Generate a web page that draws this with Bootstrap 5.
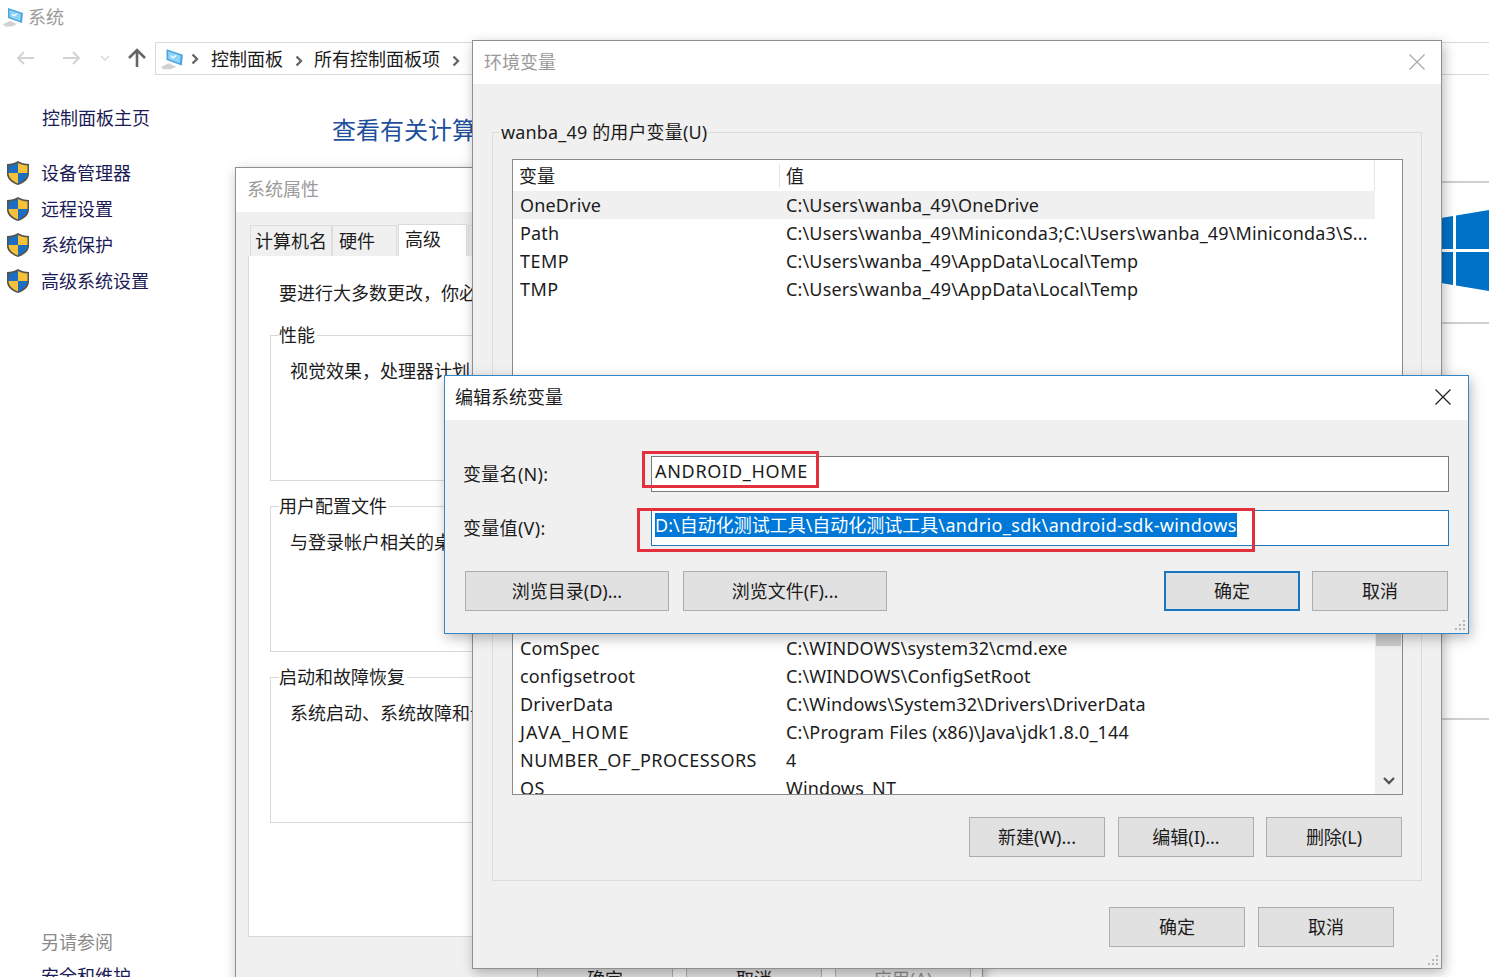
<!DOCTYPE html>
<html lang="zh">
<head>
<meta charset="utf-8">
<title>系统</title>
<link href="https://cdn.jsdelivr.net/npm/bootstrap@5.3.0/dist/css/bootstrap.min.css" rel="stylesheet">
<style>
html,body{height:100%;overflow:hidden;background:#fff}
body{font-family:"Noto Sans","Noto Sans CJK SC",sans-serif;font-size:18px;line-height:24px;color:#1c1c1c}
.desk{position:relative;width:1489px;height:977px;overflow:hidden;background:#fff}
.ex-title{height:33px;color:#9a9a9a;padding-left:2px;gap:4px}
.ex-nav{height:41px;padding-top:9px}
.nav-btns{width:155px;padding-left:15px}
.nav-btns svg{flex:none}
.nb-fwd{margin-left:27px}
.nb-down{margin-left:17px}
.nb-up{margin-left:16px}
.addr{height:33px;flex:1;border:1px solid #d9d9d9;border-right:0;padding-left:4px;white-space:nowrap}
.addr-first{margin:0 12px 0 7px}
.crumb-sep{width:31px;text-align:center}
.side{width:332px;flex:none}
.side-home{height:36px;margin-top:26px;padding-left:42px;color:#1b1b55}
.side-list{padding-top:19px}
.side-item{height:36px;gap:11px;padding-left:6px;color:#1b1b55}
.side-more{margin-top:626px;padding-left:41px;height:34px;color:#8a8a8a}
.side-link{padding-left:41px;height:34px;color:#1b1b55;white-space:nowrap}
.ex-main{flex:1;min-width:0}
.ex-h{font-size:24px;line-height:32px;color:#1d4f9c;padding-top:40px;height:107px;white-space:nowrap}
.sec1{height:141px;border-top:2px solid #cfcfcf;padding-top:25px}
.sec2{height:396px;border-top:2px solid #cfcfcf}
.sec3{border-top:2px solid #cfcfcf}
.wnd{position:absolute;background:#f0f0f0;border:1px solid #8f8f8f;box-shadow:2px 4px 12px rgba(0,0,0,.28)}
.w-sys{left:235px;top:167px;width:748px;height:860px}
.w-env{left:472px;top:40px;width:970px;height:929px}
.w-edit{left:444px;top:375px;width:1025px;height:259px;border-color:#2f86c9}
.ttl{background:#fff;padding-left:11px;color:#9a9a9a;padding-bottom:2px}
.w-sys .ttl{height:44px}
.w-env .ttl{height:43px;padding-right:16px}
.w-edit .ttl{height:44px;color:#1c1c1c;padding-right:17px;padding-left:10px}
.tabbar{margin:12px 0 0 14px;height:32px;align-items:flex-end}
.tb{height:31px;background:#f0f0f0;border:1px solid #dcdcdc;border-bottom:0;white-space:nowrap;display:flex;align-items:center;padding-left:4px}
.tb-a{width:82px}
.tb-b{width:65px;padding-left:6px}
.tb-on{height:32px;width:69px;background:#fff;padding:0 0 3px 6px;margin-left:1px;margin-right:1px}
.tb-c{width:60px}
.tabp{margin:0 10px 0 12px;height:681px;background:#fff;border:1px solid #d9d9d9;border-top:0;padding:25px 0 0 21px;overflow:hidden}
.tabp-top{padding-left:9px;height:54px;white-space:nowrap}
.sgroup{height:146px;border:1px solid #d9d9d9;margin-bottom:25px;margin-right:10px;padding:0 0 0 19px;white-space:nowrap}
.sgroup-l{background:#fff;display:inline-block;margin:-13px 0 0 -11px;padding-right:2px;vertical-align:top}
.sgroup-t{margin-top:-1px}
.sys-btns{margin:22px 0 0 301px;gap:13px}
.wbtn{--bs-btn-padding-y:0;--bs-btn-padding-x:0;--bs-btn-font-size:18px;--bs-btn-line-height:24px;--bs-btn-color:#1c1c1c;--bs-btn-bg:#e1e1e1;--bs-btn-border-color:#adadad;--bs-btn-border-radius:0;--bs-btn-hover-bg:#e1e1e1;--bs-btn-hover-color:#1c1c1c;--bs-btn-hover-border-color:#adadad;width:136px;height:40px;flex:none}
.wbtn-wide{width:204px}
.wbtn-def{--bs-btn-border-color:#1c76bd;--bs-btn-hover-border-color:#1c76bd;border-width:2px;margin-right:-2px}
.wbtn-off{--bs-btn-color:#8c8c8c;--bs-btn-hover-color:#8c8c8c}
.env-b{padding:48px 19px 0 19px}
.vgroup{border:1px solid #dcdcdc;padding:0 18px 0 19px}
.vg1{height:443px;padding-top:26px;margin-bottom:10px}
.vg2{height:296px;padding-top:14px}
.vg-l{margin:-39px 0 0 -13px;height:26px;width:max-content;padding:0 0 0 2px;background:#f0f0f0;position:relative;white-space:nowrap;letter-spacing:.15px}
.vlist{background:#fff;border:1px solid #8a8a8a;overflow:hidden}
.vl1{height:401px;margin-top:13px}
.vl2{height:195px;padding-top:33px;display:flex}
.vrows{flex:1;min-width:0}
.vsb{width:27px;flex:none;background:#f0f0f0;margin-top:-33px;display:flex;flex-direction:column;align-items:center;justify-content:space-between}
.vsb-thumb{width:25px;height:45px;background:#cdcdcd}
.vhead{height:31px;width:862px;border-right:1px solid #e5e5e5}
.vhead>div:first-child{width:267px;border-right:1px solid #e5e5e5;padding-left:6px}
.vhead>div+div{padding-left:6px}
.vrow{height:28px;width:862px;white-space:nowrap;letter-spacing:.15px}
.vrow-sel{background:#f0f0f0}
.vrow>div:first-child{width:267px;flex:none;padding-left:7px}
.vrow>div+div{padding-left:6px}
.caps{letter-spacing:.45px}
.caps-j{letter-spacing:1.2px}
.env-acts{margin-top:22px;gap:12px;justify-content:flex-end;padding-right:1px}
.env-acts .wbtn:first-child{margin-right:1px}
.env-foot{margin-top:26px;gap:13px;justify-content:flex-end;padding-right:28px}
.edit-b{padding:36px 19px 0 19px}
.ef{height:36px;margin-bottom:18px}
.ef-l{width:188px;flex:none;margin-left:-1px;margin-top:-1px}
.ef-l span{letter-spacing:.3px}
.ef-i{flex:1;border:1px solid #7a7a7a;border-radius:0;padding:2px 3px;font-size:18px;line-height:24px;color:#1c1c1c;background:#fff;min-height:0;height:36px;white-space:nowrap}
.ef-i-on{border-color:#1f78be}
.ef-caps{letter-spacing:.7px}
.sel-t{background:#0078d7;color:#fff;display:inline-block;line-height:24px}
.sel-l{letter-spacing:.36px}
.edit-acts{margin-top:25px;padding:0 1px;gap:14px}
.red-a{position:absolute;border:3px solid #e3303c;pointer-events:none}
.ra1{left:642px;top:451px;width:177px;height:37px}
.ra2{left:637px;top:508px;width:618px;height:44px}
.grip{position:absolute;right:2px;bottom:2px}
</style>
</head>
<body>
<div class="desk">
  <!-- explorer -->
  <div class="ex">
    <div class="ex-title d-flex align-items-center">
      <svg width="22" height="22" viewBox="0 0 22 22"><path d="M6 2l15 5-1 10-14-5z" fill="#4aa3e2"/><path d="M7.500 4l11.500 4-.8 7L7.500 11z" fill="#8fd3f6"/><path d="M10 8l2 2 3-2.500" stroke="#fff" stroke-width="1.200" fill="none"/><path d="M1 18l7-3 7 3-5 2.500H3z" fill="#d2d2d2"/></svg>
      <span>系统</span>
    </div>
    <div class="ex-nav d-flex">
      <div class="nav-btns d-flex align-items-center">
        <svg width="20" height="16" viewBox="0 0 20 16"><path d="M19 8H3M9 2L3 8l6 6" stroke="#d3d3d3" stroke-width="2" fill="none"/></svg>
        <svg class="nb-fwd" width="20" height="16" viewBox="0 0 20 16"><path d="M1 8h16M11 2l6 6-6 6" stroke="#d3d3d3" stroke-width="2" fill="none"/></svg>
        <svg class="nb-down" width="12" height="8" viewBox="0 0 12 8"><path d="M2 2l4 4 4-4" stroke="#dadada" stroke-width="1.500" fill="none"/></svg>
        <svg class="nb-up" width="20" height="20" viewBox="0 0 20 20"><path d="M10 19V3M2 10l8-8 8 8" stroke="#666" stroke-width="2.600" fill="none"/></svg>
      </div>
      <div class="addr d-flex align-items-center">
        <svg width="24" height="24" viewBox="0 0 22 22"><path d="M6 2l15 5-1 10-14-5z" fill="#4aa3e2"/><path d="M7.500 4l11.500 4-.8 7L7.500 11z" fill="#8fd3f6"/><path d="M10 8l2 2 3-2.500" stroke="#fff" stroke-width="1.200" fill="none"/><path d="M1 18l7-3 7 3-5 2.500H3z" fill="#d2d2d2"/></svg>
        <svg class="addr-first" width="8" height="12" viewBox="0 0 8 12"><path d="M1.500 1.500L6 6l-4.500 4.500" stroke="#666" stroke-width="2.400" fill="none"/></svg>
        <span>控制面板</span>
        <span class="crumb-sep"><svg width="8" height="12" viewBox="0 0 8 12"><path d="M1.500 1.500L6 6l-4.500 4.500" stroke="#666" stroke-width="2.400" fill="none"/></svg></span>
        <span>所有控制面板项</span>
        <span class="crumb-sep"><svg width="8" height="12" viewBox="0 0 8 12"><path d="M1.500 1.500L6 6l-4.500 4.500" stroke="#666" stroke-width="2.400" fill="none"/></svg></span>
      </div>
    </div>
    <div class="d-flex">
      <div class="side">
        <div class="side-home d-flex align-items-center">控制面板主页</div>
        <div class="side-list">
          <div class="side-item d-flex align-items-center"><svg width="24" height="26" viewBox="0 0 24 26"><path d="M12 1c3 2 7 3 11 3v10c0 5-5 9-11 11C6 23 1 19 1 14V4c4 0 8-1 11-3z" fill="#55524c"/><path d="M12 3v10H2.500V5.500c3.500 0 6.500-1 9.500-2.500z" fill="#1c6fc0"/><path d="M12 3c3 1.500 6 2.500 9.500 2.500V13H12z" fill="#f6c23a"/><path d="M2.500 13H12v10.500c-5-2-9.500-5.500-9.500-10.500z" fill="#f6c23a"/><path d="M12 13h9.500c0 5-4.500 8.500-9.500 10.500z" fill="#1c6fc0"/></svg><span>设备管理器</span></div>
          <div class="side-item d-flex align-items-center"><svg width="24" height="26" viewBox="0 0 24 26"><path d="M12 1c3 2 7 3 11 3v10c0 5-5 9-11 11C6 23 1 19 1 14V4c4 0 8-1 11-3z" fill="#55524c"/><path d="M12 3v10H2.500V5.500c3.500 0 6.500-1 9.500-2.500z" fill="#1c6fc0"/><path d="M12 3c3 1.500 6 2.500 9.500 2.500V13H12z" fill="#f6c23a"/><path d="M2.500 13H12v10.500c-5-2-9.500-5.500-9.500-10.500z" fill="#f6c23a"/><path d="M12 13h9.500c0 5-4.500 8.500-9.500 10.500z" fill="#1c6fc0"/></svg><span>远程设置</span></div>
          <div class="side-item d-flex align-items-center"><svg width="24" height="26" viewBox="0 0 24 26"><path d="M12 1c3 2 7 3 11 3v10c0 5-5 9-11 11C6 23 1 19 1 14V4c4 0 8-1 11-3z" fill="#55524c"/><path d="M12 3v10H2.500V5.500c3.500 0 6.500-1 9.500-2.500z" fill="#1c6fc0"/><path d="M12 3c3 1.500 6 2.500 9.500 2.500V13H12z" fill="#f6c23a"/><path d="M2.500 13H12v10.500c-5-2-9.500-5.500-9.500-10.500z" fill="#f6c23a"/><path d="M12 13h9.500c0 5-4.500 8.500-9.500 10.500z" fill="#1c6fc0"/></svg><span>系统保护</span></div>
          <div class="side-item d-flex align-items-center"><svg width="24" height="26" viewBox="0 0 24 26"><path d="M12 1c3 2 7 3 11 3v10c0 5-5 9-11 11C6 23 1 19 1 14V4c4 0 8-1 11-3z" fill="#55524c"/><path d="M12 3v10H2.500V5.500c3.500 0 6.500-1 9.500-2.500z" fill="#1c6fc0"/><path d="M12 3c3 1.500 6 2.500 9.500 2.500V13H12z" fill="#f6c23a"/><path d="M2.500 13H12v10.500c-5-2-9.500-5.500-9.500-10.500z" fill="#f6c23a"/><path d="M12 13h9.500c0 5-4.500 8.500-9.500 10.500z" fill="#1c6fc0"/></svg><span>高级系统设置</span></div>
        </div>
        <div class="side-more d-flex align-items-center">另请参阅</div>
        <div class="side-link d-flex align-items-center">安全和维护</div>
      </div>
      <div class="ex-main">
        <div class="ex-h">查看有关计算</div>
        <div class="sec1 d-flex justify-content-end">
          <svg width="48" height="90" viewBox="0 0 48 90"><path d="M0 10l12-2v33H0z" fill="#0072c6"/><path d="M15 7.500L48 2v39H15z" fill="#0072c6"/><path d="M0 44h12v33L0 75z" fill="#0072c6"/><path d="M15 44h33v39l-33-5.500z" fill="#0072c6"/></svg>
        </div>
        <div class="sec2"></div>
        <div class="sec3"></div>
      </div>
    </div>
  </div>

  <!-- 系统属性 -->
  <div class="wnd w-sys">
    <div class="ttl d-flex align-items-center">系统属性</div>
    <div class="tabbar d-flex">
      <div class="tb tb-a">计算机名</div><div class="tb tb-b">硬件</div><div class="tb tb-on">高级</div><div class="tb tb-c"></div>
    </div>
    <div class="tabp">
      <div class="tabp-top">要进行大多数更改，你必</div>
      <div class="sgroup"><span class="sgroup-l">性能</span><div class="sgroup-t">视觉效果，处理器计划</div></div>
      <div class="sgroup"><span class="sgroup-l">用户配置文件</span><div class="sgroup-t">与登录帐户相关的桌</div></div>
      <div class="sgroup"><span class="sgroup-l">启动和故障恢复</span><div class="sgroup-t">系统启动、系统故障和调</div></div>
    </div>
    <div class="sys-btns d-flex">
      <button class="btn wbtn" type="button">确定</button>
      <button class="btn wbtn" type="button">取消</button>
      <button class="btn wbtn wbtn-off" type="button">应用(A)</button>
    </div>
  </div>

  <!-- 环境变量 -->
  <div class="wnd w-env">
    <div class="ttl d-flex align-items-center justify-content-between"><span>环境变量</span>
      <svg width="16" height="16" viewBox="0 0 16 16"><path d="M.5.5l15 15M15.500.5l-15 15" stroke="#a8a8a8" stroke-width="1.200"/></svg>
    </div>
    <div class="env-b">
      <div class="vgroup vg1">
        <div class="vg-l">wanba_49 的用户变量(U)</div>
        <div class="vlist vl1">
          <div class="vhead d-flex align-items-center"><div>变量</div><div>值</div></div>
          <div class="vrow vrow-sel d-flex align-items-center"><div>OneDrive</div><div>C:\Users\wanba_49\OneDrive</div></div>
          <div class="vrow d-flex align-items-center"><div>Path</div><div>C:\Users\wanba_49\Miniconda3;C:\Users\wanba_49\Miniconda3\S...</div></div>
          <div class="vrow d-flex align-items-center"><div class="caps">TEMP</div><div>C:\Users\wanba_49\AppData\Local\Temp</div></div>
          <div class="vrow d-flex align-items-center"><div class="caps">TMP</div><div>C:\Users\wanba_49\AppData\Local\Temp</div></div>
        </div>
      </div>
      <div class="vgroup vg2">
        <div class="vlist vl2">
          <div class="vrows">
            <div class="vrow d-flex align-items-center"><div>ComSpec</div><div>C:\WINDOWS\system32\cmd.exe</div></div>
            <div class="vrow d-flex align-items-center"><div>configsetroot</div><div>C:\WINDOWS\ConfigSetRoot</div></div>
            <div class="vrow d-flex align-items-center"><div>DriverData</div><div>C:\Windows\System32\Drivers\DriverData</div></div>
            <div class="vrow d-flex align-items-center"><div class="caps-j">JAVA_HOME</div><div>C:\Program Files (x86)\Java\jdk1.8.0_144</div></div>
            <div class="vrow d-flex align-items-center"><div class="caps">NUMBER_OF_PROCESSORS</div><div>4</div></div>
            <div class="vrow d-flex align-items-center"><div class="caps">OS</div><div>Windows_NT</div></div>
          </div>
          <div class="vsb"><div class="vsb-thumb"></div><svg class="mb-2" width="14" height="10" viewBox="0 0 14 10"><path d="M2 2l5 5 5-5" stroke="#555" stroke-width="2.400" fill="none"/></svg></div>
        </div>
        <div class="env-acts d-flex">
          <button class="btn wbtn" type="button">新建(W)...</button>
          <button class="btn wbtn" type="button">编辑(I)...</button>
          <button class="btn wbtn" type="button">删除(L)</button>
        </div>
      </div>
      <div class="env-foot d-flex">
        <button class="btn wbtn" type="button">确定</button>
        <button class="btn wbtn" type="button">取消</button>
      </div>
    </div>
    <svg class="grip" width="12" height="12" viewBox="0 0 12 12" fill="#b5b5b5"><rect x="9" y="1" width="2" height="2"/><rect x="5" y="5" width="2" height="2"/><rect x="9" y="5" width="2" height="2"/><rect x="1" y="9" width="2" height="2"/><rect x="5" y="9" width="2" height="2"/><rect x="9" y="9" width="2" height="2"/></svg>
  </div>

  <!-- 编辑系统变量 -->
  <div class="wnd w-edit">
    <div class="ttl d-flex align-items-center justify-content-between"><span>编辑系统变量</span>
      <svg width="16" height="16" viewBox="0 0 16 16"><path d="M.5.5l15 15M15.500.5l-15 15" stroke="#222" stroke-width="1.300"/></svg>
    </div>
    <div class="edit-b">
      <div class="ef d-flex align-items-center"><div class="ef-l"><span>变量名(N):</span></div><div class="form-control ef-i ef-caps">ANDROID_HOME</div></div>
      <div class="ef d-flex align-items-center"><div class="ef-l"><span>变量值(V):</span></div><div class="form-control ef-i ef-i-on"><span class="sel-t">D:\自动化测试工具\自动化测试工具<span class="sel-l">\andrio_sdk\android-sdk-windows</span></span></div></div>
      <div class="edit-acts d-flex">
        <button class="btn wbtn wbtn-wide" type="button">浏览目录(D)...</button>
        <button class="btn wbtn wbtn-wide" type="button">浏览文件(F)...</button>
        <button class="btn wbtn wbtn-def ms-auto" type="button">确定</button>
        <button class="btn wbtn" type="button">取消</button>
      </div>
    </div>
    <svg class="grip" width="12" height="12" viewBox="0 0 12 12" fill="#b5b5b5"><rect x="9" y="1" width="2" height="2"/><rect x="5" y="5" width="2" height="2"/><rect x="9" y="5" width="2" height="2"/><rect x="1" y="9" width="2" height="2"/><rect x="5" y="9" width="2" height="2"/><rect x="9" y="9" width="2" height="2"/></svg>
  </div>

  <div class="red-a ra1"></div>
  <div class="red-a ra2"></div>
</div>
<script src="https://cdn.jsdelivr.net/npm/bootstrap@5.3.0/dist/js/bootstrap.bundle.min.js"></script>
</body>
</html>
